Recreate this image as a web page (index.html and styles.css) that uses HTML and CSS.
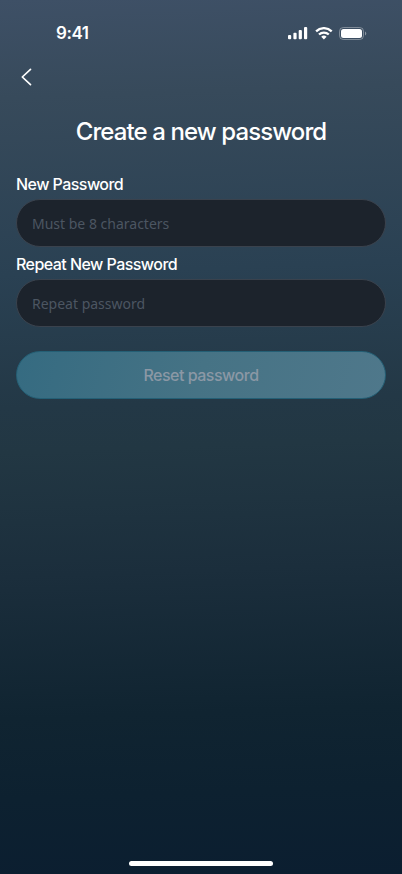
FILE: index.html
```html
<!DOCTYPE html>
<html lang="en">
<head>
<meta charset="utf-8">
<meta name="viewport" content="width=device-width, initial-scale=1">
<title>Create a new password</title>
<link rel="stylesheet" href="styles.css">
</head>
<body>
<div class="screen">
  <header class="status-bar">
    <span class="time">9:41</span>
    <div class="indicators">
      <svg class="signal" width="20" height="13" viewBox="0 0 20 13" fill="#fff">
        <rect x="0" y="8" width="3.2" height="4.2" rx="1"/>
        <rect x="5.4" y="5.8" width="3.2" height="6.4" rx="1"/>
        <rect x="10.7" y="3" width="3.2" height="9.2" rx="1"/>
        <rect x="16" y="0" width="3.2" height="12.2" rx="1"/>
      </svg>
      <svg class="wifi" width="18" height="13" viewBox="0 0 18 13" fill="none" stroke="#fff" stroke-width="2.3">
        <path d="M1.1 4.3a11.2 11.2 0 0 1 15.6 0"/>
        <path d="M4 7.5a7.1 7.1 0 0 1 9.8 0"/>
        <path d="M8.9 12.4 6.2 9.8a4 4 0 0 1 5.4 0Z" fill="#fff" stroke="none"/>
      </svg>
      <svg class="battery" width="28" height="13" viewBox="0 0 28 13">
        <rect x="0.5" y="0.5" width="24" height="12" rx="3.8" fill="none" stroke="#fff" stroke-opacity=".35"/>
        <path d="M26 4.5v4a2.2 2.2 0 0 0 0-4Z" fill="#fff" fill-opacity=".4"/>
        <rect x="2" y="2" width="21" height="9" rx="2.5" fill="#fff"/>
      </svg>
    </div>
  </header>
  <nav class="nav">
    <button class="back" aria-label="Back">
      <svg width="12" height="18" viewBox="0 0 12 18" fill="none" stroke="#fff" stroke-width="1.7" stroke-linecap="round" stroke-linejoin="round"><path d="M9.5 1.3 1.3 9l8.2 7.7"/></svg>
    </button>
  </nav>
  <main class="content">
    <h1 class="title">Create a new password</h1>
    <form class="form">
      <label class="label" for="new">New Password</label>
      <input class="field" id="new" type="password" placeholder="Must be 8 characters">
      <label class="label label-repeat" for="repeat">Repeat New Password</label>
      <input class="field" id="repeat" type="password" placeholder="Repeat password">
      <button class="submit" type="button" disabled>Reset password</button>
    </form>
  </main>
  <div class="home-indicator"></div>
</div>
</body>
</html>
```

FILE: styles.css
```css
* { box-sizing: border-box; }
body { margin: 0; font-family: Inter, "Liberation Sans", sans-serif; color: #fff; }
.screen {
  display: flex;
  flex-direction: column;
  width: 402px;
  height: 874px;
  background: linear-gradient(178deg, #3e5066 0%, #374a5b 11%, #2a4153 31%, #233846 46%, #223743 51%, #1b2e3c 65%, #102431 81%, #0d2130 90%, #0b1e30 100%);
}
.status-bar {
  display: flex;
  justify-content: space-between;
  align-items: center;
  height: 66px;
  padding: 0 35px 0 56px;
}
.time { font-size: 17px; line-height: 22px; font-weight: 600; letter-spacing: -0.45px; }
.indicators { display: flex; align-items: center; }
.wifi { margin-left: 7px; }
.battery { margin-left: 6px; }
.nav { height: 22px; padding-left: 21px; }
.back { display: flex; align-items: center; height: 22px; padding: 0; border: 0; background: none; }
.content { flex: 1; padding: 28px 16px 0; }
.title {
  margin: 0;
  text-align: center;
  font-size: 24px;
  line-height: 32px;
  font-weight: 500;
  letter-spacing: -0.9px;
}
.form { display: flex; flex-direction: column; padding-top: 26px; }
.label { font-size: 16px; line-height: 20px; font-weight: 500; letter-spacing: -0.55px; margin-bottom: 5px; }
.label-repeat { margin-top: 7px; }
.field {
  width: 100%;
  height: 48px;
  padding: 0 15px;
  border: 1px solid #3a424d;
  border-radius: 24px;
  background: #1c232c;
  color: #fff;
  font: 14px "Noto Sans", sans-serif;
}
.field::placeholder { color: #4c5662; opacity: 1; }
.submit {
  height: 48px;
  margin-top: 24px;
  padding: 0;
  border: 1px solid #245f75;
  border-radius: 24px;
  background: linear-gradient(105deg, #356b81, #467385 50%, #4f788b) border-box;
  color: #8b98a5;
  font: 500 16px Inter, sans-serif;
  letter-spacing: -0.5px;
}
.home-indicator { width: 144px; height: 5px; margin: 0 auto 8px; border-radius: 3px; background: #fff; }
```
